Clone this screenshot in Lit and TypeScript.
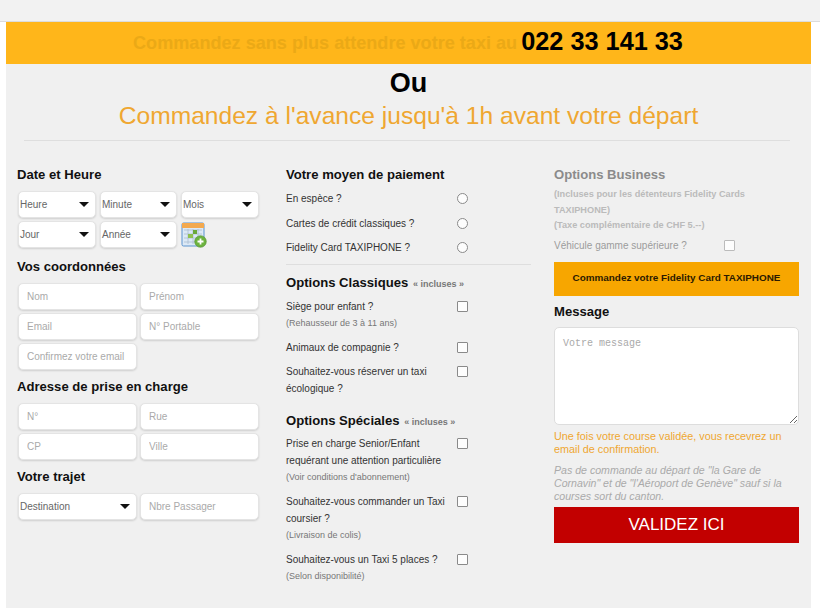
import { LitElement, html, css, svg } from 'lit';
import { customElement } from 'lit/decorators.js';

const arrow = svg`<svg class="arrow" width="10" height="5" viewBox="0 0 10 5"><path d="M0 0H10L5 5Z" fill="#111"/></svg>`;

const calendar = html`<svg class="cal" width="26" height="26" viewBox="0 0 26 26">
  <rect x="1" y="1" width="22" height="23" rx="1.5" fill="#dce9f6" stroke="#5b93cf"/>
  <rect x="1" y="1" width="22" height="5" fill="#f3a94f"/>
  <path d="M3 8H21M3 12H21M3 16H21M3 20H21M7 7V22M12 7V22M17 7V22" stroke="#a9bdd2" stroke-width=".8"/>
  <rect x="12" y="8" width="4" height="4" fill="#6aa83a"/>
  <rect x="7" y="12" width="5" height="4" fill="#8fc04f"/>
  <circle cx="19.5" cy="19.5" r="5.8" fill="#6db33f" stroke="#4f8f2a" stroke-width=".6"/>
  <path d="M19.5 16.5V22.5M16.5 19.5H22.5" stroke="#fff" stroke-width="1.8"/>
</svg>`;

@customElement('app-root')
export class AppRoot extends LitElement {
  static styles = css`
    :host {
      display: block;
      height: 611px;
      overflow: hidden;
      background: #fff;
      font-family: "Liberation Sans", Arial, sans-serif;
      font-size: 10px;
      color: #333;
    }
    .topbar {
      height: 21px;
      background: #f2f2f2;
      border-bottom: 1px solid #dcdcdc;
    }
    .panel {
      width: 805px;
      height: 586px;
      margin-left: 6px;
      background: #f0f0f0;
      overflow: hidden;
    }
    .banner {
      height: 42px;
      box-sizing: border-box;
      padding: 1px 1px 0 0;
      background: #ffb61a;
      display: flex;
      justify-content: center;
      align-items: center;
      gap: 4px;
      font-weight: bold;
      font-size: 18.1px;
      color: #eba916;
    }
    .banner b {
      font-size: 25.3px;
      color: #000;
      position: relative;
      top: -2px;
    }
    .ou {
      margin: 4px 0 0;
      text-align: center;
      font-size: 27px;
      line-height: 30px;
      font-weight: bold;
      color: #000;
    }
    .sub {
      margin: 3px 0 0;
      text-align: center;
      font-size: 24.6px;
      line-height: 30px;
      font-weight: normal;
      color: #efa731;
    }
    .rule {
      height: 1px;
      margin: 9px 21px 0 18px;
      background: #dedede;
    }
    .cols {
      display: flex;
      padding: 25px 0 0 11px;
    }
    .left { width: 243px; }
    .mid { width: 245px; margin-left: 26px; }
    .right { width: 245px; margin-left: 23px; }
    h3 {
      margin: 0;
      font-size: 13.1px;
      line-height: 17px;
      color: #111;
    }
    h3 small {
      font-size: 9px;
      line-height: 0;
      color: #777;
      margin-left: 1px;
    }
    .g3 {
      display: grid;
      grid-template-columns: 78px 77px 78px;
      column-gap: 4px;
      row-gap: 3px;
      margin: 8px 0 10px 1px;
    }
    .g2 {
      display: grid;
      grid-template-columns: 119px 119px;
      column-gap: 3px;
      row-gap: 3px;
      margin: 8px 0 8px 1px;
    }
    .box {
      height: 27px;
      box-sizing: border-box;
      background: #fff;
      border: 1px solid #e4e4e4;
      border-radius: 5px;
      box-shadow: 0 1px 2px rgba(0, 0, 0, 0.14);
    }
    input.box {
      width: 100%;
      padding: 0 8px;
      font: 10px "Liberation Sans", Arial, sans-serif;
      outline: none;
    }
    input::placeholder, textarea::placeholder { color: #aaa; opacity: 1; }
    .sel {
      display: flex;
      align-items: center;
      justify-content: space-between;
      padding: 0 6px 0 1px;
      color: #666;
    }
    .cal { margin-top: 1px; }
    .row {
      display: grid;
      grid-template-columns: 171px 12px;
      line-height: 17px;
      margin-bottom: 7px;
      color: #333;
    }
    .row small {
      display: block;
      font-size: 9px;
      color: #777;
    }
    .ctl {
      width: 11px;
      height: 11px;
      margin-top: 3px;
      box-sizing: border-box;
      background: #fdfdfd;
      border: 1px solid #8a8a8a;
      border-radius: 1px;
    }
    .ctl.radio { border-radius: 50%; }
    .list { margin-top: 7px; }
    .pay .row { margin-bottom: 7.6px; }
    .divider {
      height: 1px;
      background: #dedede;
      margin: 0.5px 0 9px;
    }
    .list-gap { margin-top: 15.2px; }
    .tight { margin-top: 6px; }
    .biz h3 { color: #8b8b8b; }
    .biz p {
      margin: 4px 0 0;
      font-size: 9.2px;
      line-height: 15.5px;
      font-weight: bold;
      color: #bbb;
    }
    .biz .row {
      color: #9c9c9c;
      margin: 3px 0 0;
      grid-template-columns: 170px 12px;
    }
    .biz .ctl { border-color: #bbb; }
    .card {
      height: 34px;
      box-sizing: border-box;
      padding-bottom: 3px;
      margin: 8px 0 7px;
      display: flex;
      align-items: center;
      justify-content: center;
      background: #f7a600;
      font-size: 9.9px;
      font-weight: bold;
      color: #2b1a00;
    }
    textarea {
      display: block;
      width: 100%;
      height: 98px;
      margin-top: 7px;
      box-sizing: border-box;
      padding: 10px 8px;
      background: #fff;
      border: 1px solid #ddd;
      border-radius: 5px;
      font: 10px "Liberation Mono", monospace;
      outline: none;
    }
    .note {
      margin: 5px 0 0;
      font-size: 10.8px;
      line-height: 13px;
      color: #efa731;
    }
    .warn {
      margin: 8px 0 0;
      font-size: 10.6px;
      line-height: 13px;
      font-style: italic;
      color: #aaa;
    }
    .go {
      height: 36px;
      margin-top: 4px;
      display: flex;
      align-items: center;
      justify-content: center;
      background: #c20000;
      color: #fff;
      font-size: 17px;
    }
  `;

  sel(label: string) {
    return html`<div class="box sel"><span>${label}</span>${arrow}</div>`;
  }

  input(ph: string) {
    return html`<input class="box" placeholder=${ph} />`;
  }

  option(label: unknown, note?: string, radio = false) {
    return html`<div class="row">
      <div>${label}${note ? html`<small>${note}</small>` : ''}</div>
      <div class="ctl ${radio ? 'radio' : ''}"></div>
    </div>`;
  }

  render() {
    return html`
      <div class="topbar"></div>
      <div class="panel">
        <div class="banner">Commandez sans plus attendre votre taxi au <b>022 33 141 33</b></div>
        <h1 class="ou">Ou</h1>
        <h2 class="sub">Commandez à l'avance jusqu'à 1h avant votre départ</h2>
        <div class="rule"></div>
        <div class="cols">
          <div class="left">
            <h3>Date et Heure</h3>
            <div class="g3">
              ${this.sel('Heure')}${this.sel('Minute')}${this.sel('Mois')}
              ${this.sel('Jour')}${this.sel('Année')}${calendar}
            </div>
            <h3>Vos coordonnées</h3>
            <div class="g2">
              ${this.input('Nom')}${this.input('Prénom')}
              ${this.input('Email')}${this.input('N° Portable')}
              ${this.input('Confirmez votre email')}
            </div>
            <h3>Adresse de prise en charge</h3>
            <div class="g2">
              ${this.input('N°')}${this.input('Rue')}
              ${this.input('CP')}${this.input('Ville')}
            </div>
            <h3>Votre trajet</h3>
            <div class="g2">
              ${this.sel('Destination')}${this.input('Nbre Passager')}
            </div>
          </div>

          <div class="mid">
            <h3>Votre moyen de paiement</h3>
            <div class="list pay">
              ${this.option('En espèce ?', undefined, true)}
              ${this.option('Cartes de crédit classiques ?', undefined, true)}
              ${this.option('Fidelity Card TAXIPHONE ?', undefined, true)}
            </div>
            <div class="divider"></div>
            <h3>Options Classiques <small>« incluses »</small></h3>
            <div class="list">
              ${this.option('Siège pour enfant ?', '(Rehausseur de 3 à 11 ans)')}
              ${this.option('Animaux de compagnie ?')}
              ${this.option('Souhaitez-vous réserver un taxi écologique ?')}
            </div>
            <h3 class="list-gap">Options Spéciales <small>« incluses »</small></h3>
            <div class="list tight">
              ${this.option('Prise en charge Senior/Enfant requérant une attention particulière', "(Voir conditions d'abonnement)")}
              ${this.option('Souhaitez-vous commander un Taxi coursier ?', '(Livraison de colis)')}
              ${this.option('Souhaitez-vous un Taxi 5 places ?', '(Selon disponibilité)')}
            </div>
          </div>

          <div class="right">
            <div class="biz">
              <h3>Options Business</h3>
              <p>(Incluses pour les détenteurs Fidelity Cards TAXIPHONE)<br />(Taxe complémentaire de CHF 5.--)</p>
              ${this.option('Véhicule gamme supérieure ?')}
            </div>
            <div class="card">Commandez votre Fidelity Card TAXIPHONE</div>
            <h3>Message</h3>
            <textarea placeholder="Votre message"></textarea>
            <p class="note">Une fois votre course validée, vous recevrez un email de confirmation.</p>
            <p class="warn">Pas de commande au départ de "la Gare de Cornavin" et de "l'Aéroport de Genève" sauf si la courses sort du canton.</p>
            <div class="go">VALIDEZ ICI</div>
          </div>
        </div>
      </div>
    `;
  }
}
